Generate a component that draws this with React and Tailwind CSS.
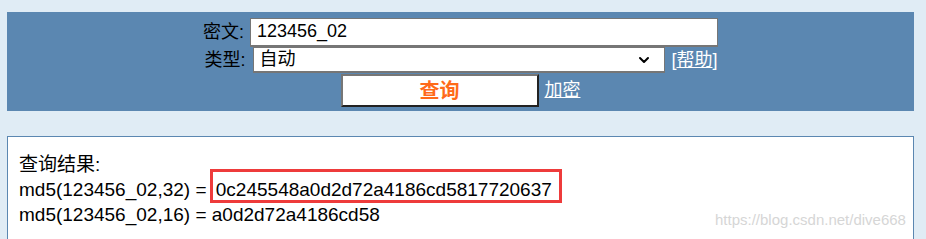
import { ChevronDown } from "lucide-react";

const font = { fontFamily: '"Liberation Sans", "Noto Sans CJK SC", sans-serif' };

const App = () => {
    return (
        <div className="relative h-[239px] w-[926px] overflow-hidden bg-[#e0ecf5] pt-[12px] text-[18px] text-black" style={font}>
            {/* query form */}
            <div className="ml-[7px] flex w-[907px] flex-col items-center bg-[#5b87b1] pt-[5px] pb-[4px]">
                <div className="flex h-[30px] items-center">
                    <span className="mr-[6px] leading-none">密文:</span>
                    <div className="flex h-[29px] w-[468px] items-center border border-b-2 border-[#767676] bg-white px-[6px]">
                        123456_02
                    </div>
                </div>
                <div className="flex h-[26px] items-center">
                    <span className="mr-[8px] ml-[1px] leading-none">类型:</span>
                    <div className="flex h-[26px] w-[412px] items-center justify-between border border-b-2 border-[#767676] bg-white pr-[12px] pl-[5px]">
                        <span>自动</span>
                        <ChevronDown size={16} strokeWidth={3} />
                    </div>
                    <span className="ml-[6px] text-white">
                        [<span className="underline">帮助</span>]
                    </span>
                </div>
                <div className="flex h-[34px] items-center">
                    <button className="h-[33px] w-[198px] border-2 border-t-[#767676] border-l-[#767676] border-r-[#222] border-b-[#222] bg-white text-[20px] font-bold text-[#ff6a1a]">
                        查询
                    </button>
                    <a className="ml-[6px] text-white underline">加密</a>
                </div>
            </div>

            {/* results */}
            <div className="mt-[25px] ml-[7px] h-[120px] w-[907px] border border-[#5b87b1] bg-white pt-[15px] pl-[11px] text-[19px] leading-[25px]">
                <div>查询结果:</div>
                <div>
                    md5(123456_02,32) ={" "}
                    <span className="relative ml-[4px]">
                        0c245548a0d2d72a4186cd5817720637
                        <span className="absolute top-[-10px] left-[-6px] h-[34px] w-[352px] border-[3px] border-[#ee3b3b]" />
                    </span>
                </div>
                <div>md5(123456_02,16) = a0d2d72a4186cd58</div>
            </div>

            <div className="absolute top-[209px] left-[715px] text-[15px] text-[#d6d6d6]">
                https://blog.csdn.net/dive668
            </div>
        </div>
    );
};

export default App;
